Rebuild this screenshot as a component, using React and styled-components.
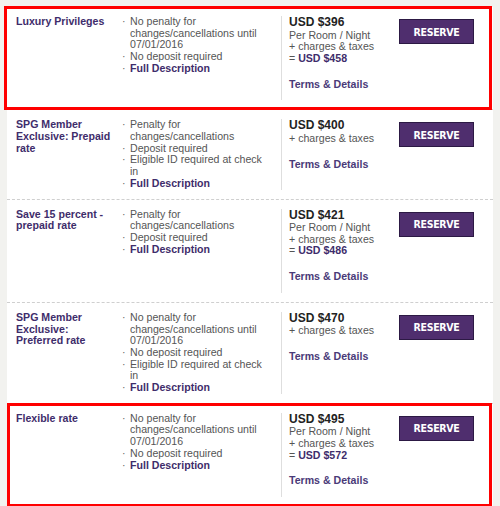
import React from "react";
import styled, { createGlobalStyle } from "styled-components";

const GlobalStyle = createGlobalStyle`
  html, body {
    margin: 0;
    padding: 0;
    background: #f2f2ef;
  }
  body {
    font-family: "Liberation Sans", Arial, Helvetica, sans-serif;
  }
`;

const Page = styled.div`
  padding: 7px 7px 0 7px;
`;

const Card = styled.div`
  background: #fff;
  width: 486px;
`;

const Row = styled.div`
  position: relative;
  display: flex;
  align-items: flex-start;
  padding: 9px 19px 9px 9px;
  border-bottom: 1px dashed #cfcfcf;

  &::after {
    content: "";
    display: ${(p) => (p.$highlight ? "block" : "none")};
    position: absolute;
    top: -1px;
    left: ${(p) => p.$shiftLeft}px;
    right: 1px;
    bottom: -1px;
    border: 3px solid #f00;
    pointer-events: none;
  }
`;

const Title = styled.div`
  width: 99px;
  flex: none;
  font-size: 10.6px;
  line-height: 11.7px;
  font-weight: bold;
  color: #3e2d6b;
`;

const Conditions = styled.ul`
  list-style: none;
  margin: 0 0 0 6px;
  padding: 0 13px 0 0;
  width: 147px;
  flex: none;
`;

const Condition = styled.li`
  display: flex;
  font-size: 10.6px;
  line-height: 11.7px;
  color: ${(p) => (p.$link ? "#3e2d6b" : "#555")};
  font-weight: ${(p) => (p.$link ? "bold" : "normal")};

  &::before {
    content: "·";
    flex: none;
    width: 9px;
    color: #666;
    font-weight: normal;
    padding-left: 1px;
    box-sizing: border-box;
  }
`;

const Pricing = styled.div`
  flex: 1;
  align-self: stretch;
  border-left: 1px solid #dedede;
  padding: 0 0 10px 7px;
`;

const Price = styled.div`
  font-size: 12px;
  line-height: 13.5px;
  font-weight: bold;
  color: #222;
`;

const Note = styled.div`
  font-size: 10.6px;
  line-height: 11.7px;
  color: #555;
`;

const Total = styled.span`
  font-weight: bold;
  color: #3e2d6b;
`;

const Terms = styled.div`
  margin-top: 14px;
  font-size: 10.6px;
  line-height: 11.7px;
  font-weight: bold;
  color: #4a3a78;
`;

const ReserveButton = styled.button`
  flex: none;
  width: 75px;
  height: 25px;
  margin-top: 3px;
  padding: 0;
  background: #4f2e6e;
  border: 1px solid #2c1944;
  color: #fff;
  font-family: "Liberation Sans Narrow", "DejaVu Sans Condensed", Arial, sans-serif;
  font-size: 10.5px;
  letter-spacing: -0.3px;
  font-weight: bold;
  cursor: pointer;
`;

const rates = [
  {
    title: "Luxury Privileges",
    conditions: [
      "No penalty for changes/cancellations until 07/01/2016",
      "No deposit required",
    ],
    price: "USD $396",
    perNight: true,
    total: "USD $458",
    highlight: true,
    shift: -3,
  },
  {
    title: "SPG Member Exclusive: Prepaid rate",
    conditions: [
      "Penalty for changes/cancellations",
      "Deposit required",
      "Eligible ID required at check in",
    ],
    price: "USD $400",
  },
  {
    title: "Save 15 percent - prepaid rate",
    conditions: ["Penalty for changes/cancellations", "Deposit required"],
    price: "USD $421",
    perNight: true,
    total: "USD $486",
  },
  {
    title: "SPG Member Exclusive: Preferred rate",
    conditions: [
      "No penalty for changes/cancellations until 07/01/2016",
      "No deposit required",
      "Eligible ID required at check in",
    ],
    price: "USD $470",
  },
  {
    title: "Flexible rate",
    conditions: [
      "No penalty for changes/cancellations until 07/01/2016",
      "No deposit required",
    ],
    price: "USD $495",
    perNight: true,
    total: "USD $572",
    highlight: true,
    shift: 0,
  },
];

function RateRow({ rate }) {
  return (
    <Row $highlight={rate.highlight} $shiftLeft={rate.shift || 0}>
      <Title>{rate.title}</Title>
      <Conditions>
        {rate.conditions.map((c) => (
          <Condition key={c}>
            <span>{c}</span>
          </Condition>
        ))}
        <Condition $link>
          <span>Full Description</span>
        </Condition>
      </Conditions>
      <Pricing>
        <Price>{rate.price}</Price>
        {rate.perNight && <Note>Per Room / Night</Note>}
        <Note>+ charges &amp; taxes</Note>
        {rate.total && (
          <Note>
            = <Total>{rate.total}</Total>
          </Note>
        )}
        <Terms>Terms &amp; Details</Terms>
      </Pricing>
      <ReserveButton>RESERVE</ReserveButton>
    </Row>
  );
}

export default function App() {
  return (
    <>
      <GlobalStyle />
      <Page>
        <Card>
          {rates.map((r) => (
            <RateRow key={r.title} rate={r} />
          ))}
        </Card>
      </Page>
    </>
  );
}
